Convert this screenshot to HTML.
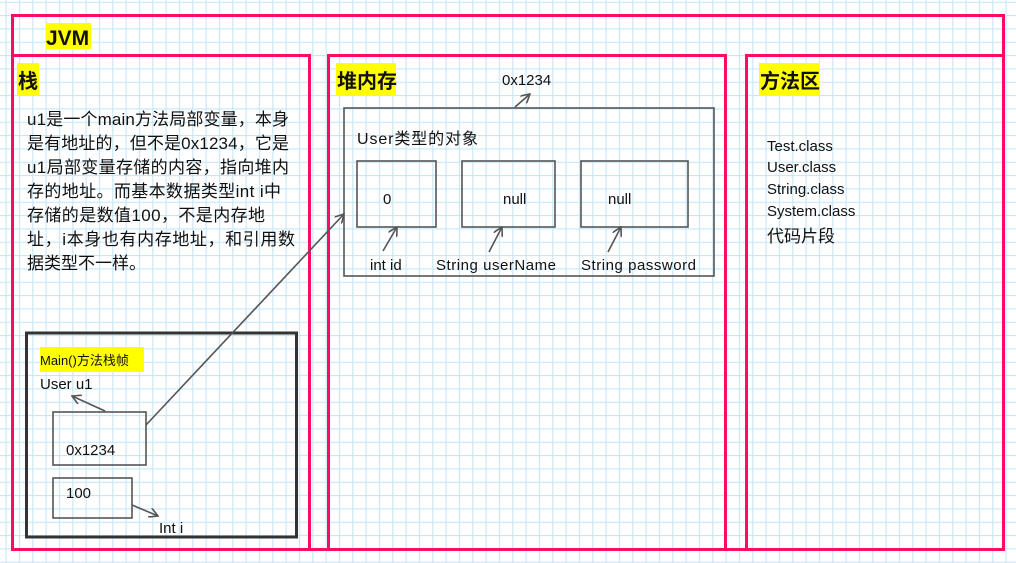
<!DOCTYPE html>
<html><head><meta charset="utf-8"><style>
html,body{margin:0;padding:0;background:#fff;}
svg{display:block;}
text{font-family:"Liberation Sans","Noto Sans CJK SC",sans-serif;fill:#111;}
.b{font-weight:bold;}
</style></head><body>
<svg width="1016" height="563" viewBox="0 0 1016 563" xmlns="http://www.w3.org/2000/svg">
<defs>
<pattern id="g" x="5.6" y="1.7" width="13.333" height="13.333" patternUnits="userSpaceOnUse">
<path d="M0.5 0V13.333M0 0.5H13.333" stroke="#c6e6f8" stroke-width="1.2" fill="none"/>
</pattern>
<marker id="a" markerWidth="10" markerHeight="10" refX="9" refY="5" orient="auto" markerUnits="userSpaceOnUse">
<path d="M0 0L9 5L0 10" fill="none" stroke="#555" stroke-width="1.6"/>
</marker>
</defs>
<rect width="1016" height="563" fill="#fff"/>
<rect width="1016" height="563" fill="url(#g)"/>
<g fill="none" stroke="#ff0a64" stroke-width="3">
<rect x="12.5" y="15.5" width="991" height="534"/>
<rect x="12.5" y="55.5" width="297" height="494"/>
<rect x="328.5" y="55.5" width="397" height="494"/>
<rect x="746.5" y="55.5" width="257" height="494"/>
</g>
<g fill="#ffff00">
<rect x="46" y="23" width="45" height="26"/>
<rect x="17" y="63" width="22" height="33"/>
<rect x="336" y="63" width="60" height="33"/>
<rect x="759" y="63" width="60" height="33"/>
<rect x="40" y="347" width="104" height="25"/>
</g>
<text x="46" y="45" class="b" font-size="21">JVM</text>
<text x="18" y="88" class="b" font-size="20">栈</text>
<text x="337" y="88" class="b" font-size="20">堆内存</text>
<text x="760" y="88" class="b" font-size="20">方法区</text>
<g font-size="17">
<text x="27" y="125" textLength="262">u1是一个main方法局部变量，本身</text>
<text x="27" y="149" textLength="262">是有地址的，但不是0x1234，它是</text>
<text x="27" y="173" textLength="262">u1局部变量存储的内容，指向堆内</text>
<text x="27" y="197" textLength="254">存的地址。而基本数据类型int i中</text>
<text x="27" y="221" textLength="238">存储的是数值100，不是内存地</text>
<text x="27" y="245" textLength="268">址，i本身也有内存地址，和引用数</text>
<text x="27" y="269">据类型不一样。</text>
</g>
<rect x="26.5" y="333" width="270" height="204" fill="none" stroke="#333" stroke-width="3"/>
<text x="40" y="365" font-size="13">Main()方法栈帧</text>
<text x="40" y="389" font-size="15">User u1</text>
<g fill="none" stroke="#555" stroke-width="1.6">
<rect x="53" y="412" width="93" height="53"/>
<rect x="53" y="478" width="79" height="40"/>
<rect x="344" y="108" width="370" height="168"/>
<rect x="357" y="161" width="79" height="66"/>
<rect x="462" y="161" width="93" height="66"/>
<rect x="581" y="161" width="107" height="66"/>
<line x1="105" y1="411" x2="72" y2="396" marker-end="url(#a)"/>
<line x1="132" y1="505" x2="158" y2="516" marker-end="url(#a)"/>
<line x1="146" y1="425" x2="344" y2="214" marker-end="url(#a)"/>
<line x1="515" y1="107" x2="530" y2="94" marker-end="url(#a)"/>
<line x1="383" y1="251" x2="397" y2="227" marker-end="url(#a)"/>
<line x1="489" y1="252" x2="502" y2="227" marker-end="url(#a)"/>
<line x1="608" y1="252" x2="621" y2="227" marker-end="url(#a)"/>
</g>
<g font-size="15">
<text x="66" y="455">0x1234</text>
<text x="66" y="498">100</text>
<text x="159" y="533">Int i</text>
<text x="502" y="85">0x1234</text>
<text x="357" y="144" font-size="16" textLength="121">User类型的对象</text>
<text x="383" y="204">0</text>
<text x="503" y="204">null</text>
<text x="608" y="204">null</text>
<text x="370" y="270">int id</text>
<text x="436" y="270" textLength="120">String userName</text>
<text x="581" y="270" textLength="115">String password</text>
<text x="767" y="151">Test.class</text>
<text x="767" y="172">User.class</text>
<text x="767" y="194">String.class</text>
<text x="767" y="216">System.class</text>
<text x="767" y="242" font-size="17">代码片段</text>
</g>
</svg>
</body></html>
